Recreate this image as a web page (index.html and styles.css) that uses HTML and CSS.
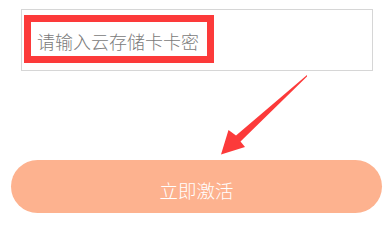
FILE: index.html
```html
<!DOCTYPE html>
<html lang="zh-CN">
<head>
<meta charset="utf-8">
<link rel="stylesheet" href="styles.css">
</head>
<body>
<div class="page">
  <div class="input-box">
    <span class="placeholder">请输入云存储卡卡密</span>
  </div>
  <button class="activate">立即激活</button>
  <div class="mark-rect"></div>
  <svg class="mark-arrow" width="389" height="215" viewBox="0 0 389 215">
    <polygon points="307,75 236,135.5 228.5,130 221,154.5 245,147 240.5,141.5 307,76.5" fill="#fc3a3a"/>
  </svg>
</div>
</body>
</html>
```

FILE: styles.css
```css
html, body {
  margin: 0;
  padding: 0;
  background: #ffffff;
}
.page {
  position: relative;
  width: 389px;
  height: 215px;
  overflow: hidden;
  font-family: "Noto Sans CJK SC", "Noto Sans", sans-serif;
  display: flex;
  flex-direction: column;
}
.input-box {
  margin: 9px 0 0 21px;
  width: 335px;
  height: 60px;
  border: 1px solid #d6d6d6;
  display: flex;
  align-items: center;
  padding-left: 15px;
  box-sizing: content-box;
}
.placeholder {
  font-size: 18px;
  line-height: 18px;
  font-weight: 300;
  color: #7a7a7a;
  padding-top: 1px;
}
.activate {
  margin: 89px 0 0 11px;
  width: 371px;
  height: 53px;
  border: none;
  border-radius: 27px;
  background: #fdb28f;
  color: #ffffff;
  font-family: "Noto Sans CJK SC", "Noto Sans", sans-serif;
  font-size: 18.5px;
  font-weight: 300;
  padding: 6px 0 0 0;
  display: flex;
  align-items: center;
  justify-content: center;
}
.mark-rect {
  position: absolute;
  left: 24px;
  top: 15px;
  width: 176px;
  height: 34px;
  border: 7px solid #fc3a3a;
}
.mark-arrow {
  position: absolute;
  left: 0;
  top: 0;
}
```
